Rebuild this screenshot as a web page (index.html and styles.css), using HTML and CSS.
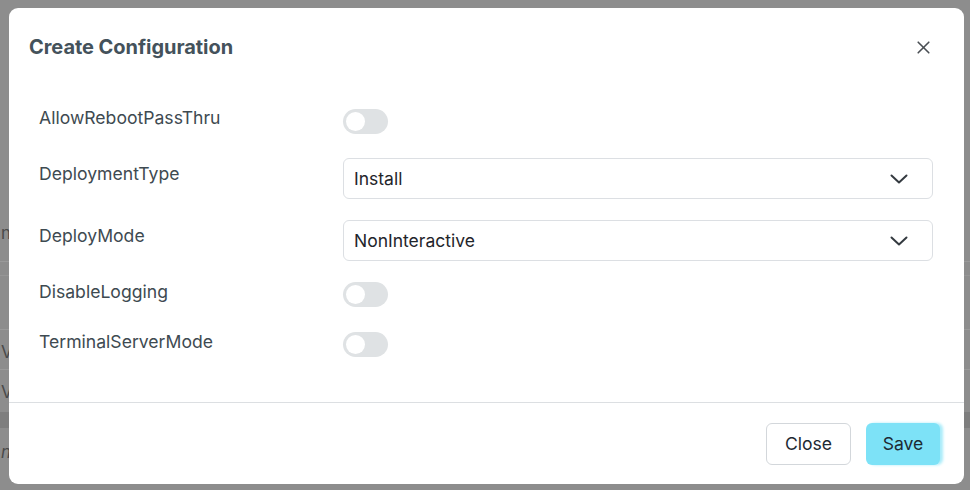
FILE: index.html
```html
<!DOCTYPE html>
<html lang="en">
<head>
<meta charset="utf-8">
<title>Create Configuration</title>
<link rel="stylesheet" href="styles.css">
</head>
<body>
<div class="backdrop">
  <div class="bg-row bg-row--a"><span class="bg-txt bg-txt--top">n</span></div>
  <div class="bg-row bg-row--b"></div>
  <div class="bg-row bg-row--c"></div>
  <div class="bg-row bg-row--d"><span class="bg-txt">V</span></div>
  <div class="bg-row bg-row--e"><span class="bg-txt">V</span></div>
  <div class="bg-row bg-row--band"></div>
  <div class="bg-row bg-row--f"><span class="bg-txt bg-txt--i">n</span></div>
</div>

<div class="modal">
  <header class="modal-header">
    <h1 class="modal-title">Create Configuration</h1>
    <button class="btn-x" aria-label="Close">
      <svg width="13" height="13" viewBox="0 0 13 13"><path d="M1.2 1.2 L11.8 11.8 M11.8 1.2 L1.2 11.8" stroke="#4a4f54" stroke-width="1.6" stroke-linecap="round" fill="none"/></svg>
    </button>
  </header>

  <div class="modal-body">
    <div class="field field--switch field--first">
      <label class="field-label">AllowRebootPassThru</label>
      <span class="switch"><span class="knob"></span></span>
    </div>
    <div class="field field--select field--second">
      <label class="field-label">DeploymentType</label>
      <div class="select">
        <span>Install</span>
        <svg class="chev" width="18" height="10" viewBox="0 0 18 10"><path d="M1.5 1.5 L9 8.5 L16.5 1.5" stroke="#343a40" stroke-width="2" fill="none" stroke-linecap="round" stroke-linejoin="round"/></svg>
      </div>
    </div>
    <div class="field field--select field--third">
      <label class="field-label">DeployMode</label>
      <div class="select">
        <span>NonInteractive</span>
        <svg class="chev" width="18" height="10" viewBox="0 0 18 10"><path d="M1.5 1.5 L9 8.5 L16.5 1.5" stroke="#343a40" stroke-width="2" fill="none" stroke-linecap="round" stroke-linejoin="round"/></svg>
      </div>
    </div>
    <div class="field field--switch field--fourth">
      <label class="field-label">DisableLogging</label>
      <span class="switch"><span class="knob"></span></span>
    </div>
    <div class="field field--switch field--fifth">
      <label class="field-label">TerminalServerMode</label>
      <span class="switch"><span class="knob"></span></span>
    </div>
  </div>

  <footer class="modal-footer">
    <button class="btn btn-close">Close</button>
    <button class="btn btn-save">Save</button>
  </footer>
</div>
</body>
</html>
```

FILE: styles.css
```css
* { box-sizing: border-box; }
html, body { margin: 0; padding: 0; }
body {
  width: 970px;
  height: 490px;
  overflow: hidden;
  background: #8d8d8d;
  font-family: Inter, "Noto Sans", "Liberation Sans", sans-serif;
  position: relative;
}

/* backdrop content (dimmed page behind the modal) */
.backdrop { display: flex; flex-direction: column; }
.bg-row { border-bottom: 1px solid #999; position: relative; }
.bg-row--a { height: 262px; border-bottom-color: #9a9a9a; }
.bg-row--b { height: 14px; border-bottom-color: #969696; }
.bg-row--c { height: 54px; border-bottom-color: #9a9a9a; }
.bg-row--d { height: 40px; border-bottom-color: #9a9a9a; }
.bg-row--e { height: 42px; border-bottom: none; }
.bg-row--band { height: 16px; background: #7e7e7e; border-bottom: none; }
.bg-row--f { height: 60px; border-bottom: none; }
.bg-txt { position: absolute; left: 1px; top: 12px; font-size: 17px; color: #4a4a4a; }
.bg-txt--top { top: auto; bottom: 18px; }
.bg-txt--i { top: 14px; font-style: italic; }

/* modal */
.modal {
  position: absolute;
  left: 9px;
  top: 8px;
  width: 955px;
  height: 476px;
  background: #fff;
  border-radius: 9px;
  display: flex;
  flex-direction: column;
}
.modal-header {
  height: 78px;
  flex: none;
  display: flex;
  align-items: center;
  justify-content: space-between;
  padding: 0 34px 0 20px;
}
.modal-title {
  margin: 0;
  font-size: 20px;
  font-weight: 700;
  color: #44525b;
  letter-spacing: -0.05px;
}
.btn-x {
  border: 0;
  background: transparent;
  padding: 0;
  width: 13px;
  height: 13px;
  display: flex;
}

.modal-body {
  flex: 1;
  padding: 20px 31px 0 30px;
  display: flex;
  flex-direction: column;
  border-bottom: 1px solid #dcdfe2;
}
.field {
  display: flex;
  align-items: flex-start;
}
.field-label {
  width: 304px;
  flex: none;
  font-size: 17.6px;
  line-height: 24px;
  color: #3e4a51;
}
.field--select .field-label { padding-top: 4px; }
.field--second { margin-top: 24px; }
.field--third { margin-top: 21px; }
.field--fourth { margin-top: 19px; }
.field--fifth { margin-top: 23px; }
.field--first .switch { margin-top: 3px; }
.field--fourth .switch, .field--fifth .switch { margin-top: 2px; }

.switch {
  width: 45px;
  height: 25px;
  border-radius: 13px;
  background: #dfe2e4;
  display: flex;
  align-items: center;
  padding-left: 3px;
}
.knob {
  width: 19px;
  height: 19px;
  border-radius: 50%;
  background: #fff;
}

.select {
  flex: 1;
  height: 41px;
  border: 1px solid #dcdfe3;
  border-radius: 6px;
  display: flex;
  align-items: center;
  justify-content: space-between;
  padding: 0 24px 0 10px;
  font-size: 17.5px;
  color: #1f252b;
}

.modal-footer {
  height: 81px;
  flex: none;
  display: flex;
  align-items: center;
  justify-content: flex-end;
  gap: 15px;
  padding: 0 24px 0 0;
}
.btn {
  font-family: inherit;
  font-size: 17.6px;
  height: 42px;
  border-radius: 6px;
  color: #1d2a33;
  padding: 0;
}
.btn-close {
  width: 85px;
  background: #fff;
  border: 1px solid #d3d7db;
}
.btn-save {
  width: 74px;
  background: #7de2f7;
  border: 0;
  box-shadow: 3px 0 3px #a9ecfa;
}
```
